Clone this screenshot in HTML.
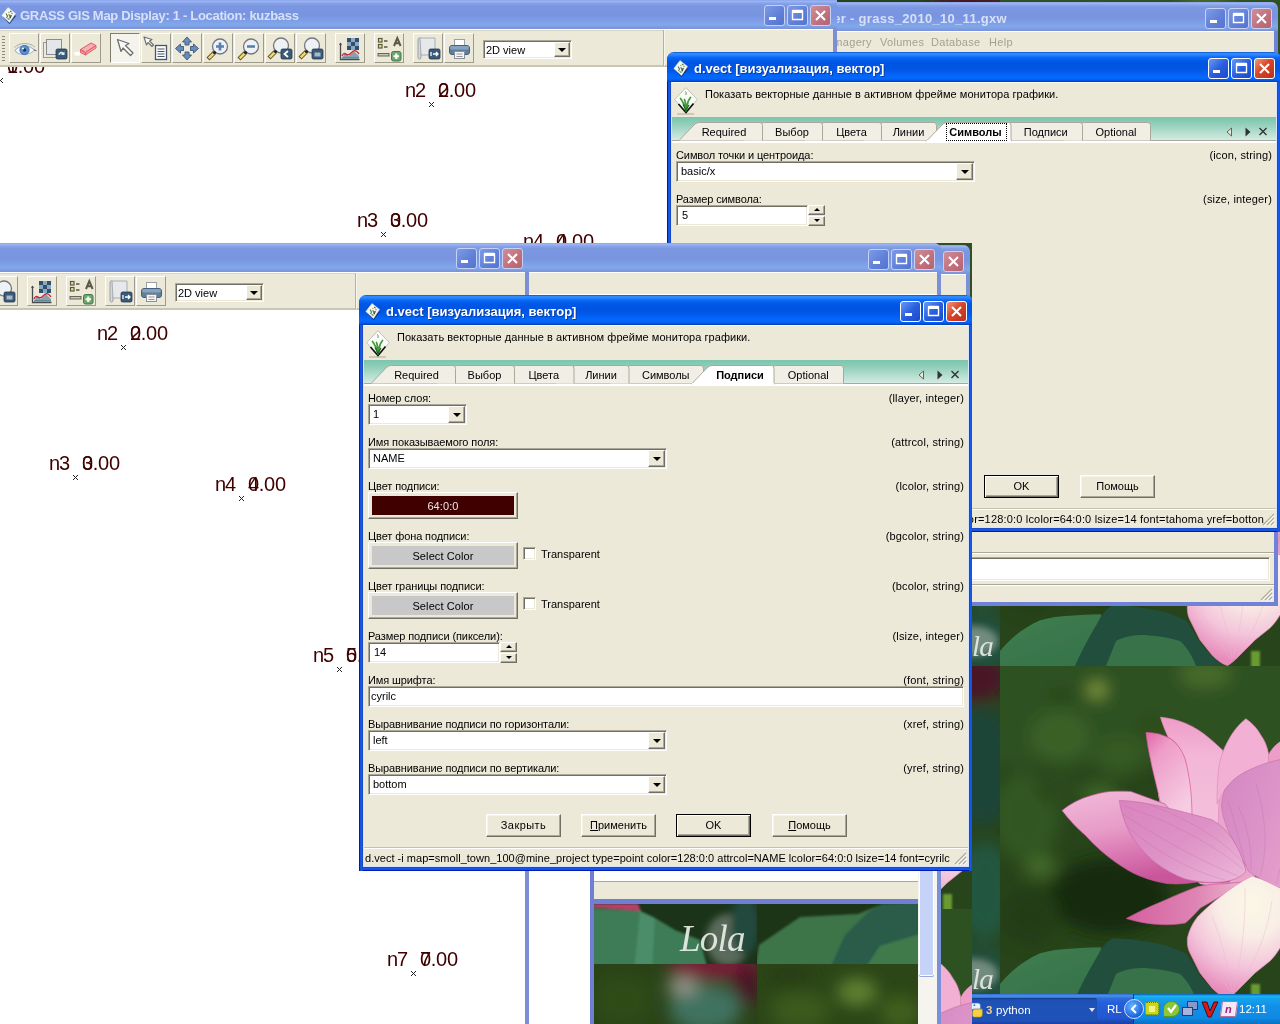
<!DOCTYPE html>
<html><head><meta charset="utf-8"><title>GRASS GIS</title>
<style>
*{box-sizing:border-box;margin:0;padding:0}
html,body{width:1280px;height:1024px;overflow:hidden;background:#27431a}
body{position:relative;opacity:.999;font-family:"Liberation Sans",sans-serif;font-size:11px;color:#000}
.a{position:absolute}
.t{position:absolute;white-space:nowrap;line-height:13px;height:13px;font-size:11px;letter-spacing:0}
.r{text-align:right;letter-spacing:.15px}
.clip{position:absolute;overflow:hidden}
.tb{position:absolute;left:0;top:0;height:30px;width:100%;border-radius:7px 7px 0 0}
.tb.act{background:linear-gradient(#0a50c8 0,#2f8aff 5%,#2a84ff 10%,#0a68f4 18%,#0058e6 30%,#0054e2 48%,#0259ea 64%,#0366fa 78%,#0468fc 88%,#0458e8 94%,#0043bd 100%)}
.tb.ina{background:linear-gradient(#8aa4ea 0,#9ab5f2 5%,#86a1e8 12%,#7b97e0 20%,#7994e0 55%,#7e9fe8 72%,#81a8e8 86%,#7e9ce2 93%,#7b90dc 100%)}
.tt{position:absolute;top:9px;font-weight:bold;font-size:13px;line-height:16px;white-space:nowrap;color:#fff;text-shadow:1px 1px 0 rgba(10,42,128,.65)}
.ina .tt{color:#d6e0f7;text-shadow:none}
.wb{position:absolute;top:6px;width:21px;height:21px;border:1px solid #fff;border-radius:3px;background:linear-gradient(135deg,#6a98f4 0,#2a5fe0 50%,#1c48c8 100%)}
.wb.cl{background:linear-gradient(135deg,#ee9a7a 0,#d8452a 45%,#b8301a 100%)}
.ina .wb{border-color:#c5d2f2;background:linear-gradient(135deg,#7d9be6 0,#5f7fd8 60%,#5474cf 100%)}
.ina .wb.cl{background:linear-gradient(135deg,#cf8f98 0,#c0707c 60%,#b46472 100%)}
.wb svg{position:absolute;left:0;top:0;width:19px;height:19px}
.beige{background:#ece9d8}
.sunk{position:absolute;background:#fff;border:1px solid;border-color:#aca899 #fff #fff #aca899;box-shadow:inset 1px 1px 0 #716f64,inset -1px -1px 0 #ece9d8}
.cbtn{position:absolute;background:#ece9d8;border:1px solid;border-color:#fff #716f64 #716f64 #fff;box-shadow:inset -1px -1px 0 #aca899,inset 1px 1px 0 #ece9d8}
.cbtn i{position:absolute;left:50%;top:50%;margin:-2px 0 0 -4px;border-style:solid;border-width:4px 4px 0 4px;border-color:#000 transparent transparent transparent;width:0;height:0}
.btn{position:absolute;height:23px;width:75px;background:#ece9d8;border:1px solid;border-color:#fff #716f64 #716f64 #fff;box-shadow:inset -1px -1px 0 #aca899,inset 1px 1px 0 #f6f4ea;text-align:center;line-height:20px;font-size:11px}
.btn.def{border-color:#000;box-shadow:inset 1px 1px 0 #fff,inset -1px -1px 0 #716f64,inset -2px -2px 0 #aca899}
.tab{position:absolute;top:5px;height:19px;background:#f2f0e6;border:1px solid #aca899;border-bottom:0;border-left:0;text-align:center;line-height:17px;font-size:11px;letter-spacing:.15px}
.ml{position:absolute;white-space:nowrap;font-size:20px;line-height:22px;color:#400000;letter-spacing:-.3px}
.mx{position:absolute;width:5px;height:5px;background:linear-gradient(45deg,transparent 42%,#222 42%,#222 58%,transparent 58%),linear-gradient(-45deg,transparent 42%,#222 42%,#222 58%,transparent 58%)}
</style></head><body>
<svg width="0" height="0" style="position:absolute"><defs>
<filter id="b6" x="-30%" y="-30%" width="160%" height="160%"><feGaussianBlur stdDeviation="8"/></filter>
<filter id="b3" x="-30%" y="-30%" width="160%" height="160%"><feGaussianBlur stdDeviation="3.5"/></filter>
<filter id="b2" x="-20%" y="-20%" width="140%" height="140%"><feGaussianBlur stdDeviation="1.2"/></filter>
<filter id="b1"><feGaussianBlur stdDeviation=".6"/></filter>
<linearGradient id="pk1" x1="0" y1="0" x2=".35" y2="1"><stop offset="0" stop-color="#f2bcd9"/><stop offset=".45" stop-color="#e79cc8"/><stop offset=".75" stop-color="#d873b0"/><stop offset="1" stop-color="#c9559a"/></linearGradient>
<linearGradient id="pk2" x1="0" y1="0" x2="1" y2=".6"><stop offset="0" stop-color="#d486c2"/><stop offset=".6" stop-color="#dc94c8"/><stop offset="1" stop-color="#e4a0cc"/></linearGradient>
<linearGradient id="pk3" x1="0" y1="0" x2=".6" y2="1"><stop offset="0" stop-color="#e068a8"/><stop offset=".3" stop-color="#ee9cc8"/><stop offset="1" stop-color="#f6cce2"/></linearGradient>
<linearGradient id="pk5" x1="0" y1="0" x2="0" y2="1"><stop offset="0" stop-color="#ee9cc8"/><stop offset=".35" stop-color="#f3b6d6"/><stop offset="1" stop-color="#f4c0dc"/></linearGradient>
<linearGradient id="pk6" x1="0" y1="0" x2="1" y2="1"><stop offset="0" stop-color="#da84be"/><stop offset=".5" stop-color="#dd92c6"/><stop offset="1" stop-color="#edb8d8"/></linearGradient>
<radialGradient id="wh" gradientUnits="userSpaceOnUse" cx="252" cy="238" r="92"><stop offset="0" stop-color="#fbf8e6"/><stop offset=".35" stop-color="#f9eee6"/><stop offset=".7" stop-color="#f3c4da"/><stop offset="1" stop-color="#e88cbc"/></radialGradient>
<linearGradient id="pk4" x1="0" y1="0" x2="1" y2="0"><stop offset="0" stop-color="#d4609e"/><stop offset=".6" stop-color="#de84b4"/><stop offset="1" stop-color="#ecb4cc"/></linearGradient>
<linearGradient id="lf1" x1="0" y1="0" x2="1" y2="1"><stop offset="0" stop-color="#3f7e50"/><stop offset="1" stop-color="#347048"/></linearGradient>
<symbol id="tile" viewBox="0 0 500 333" overflow="hidden">
<rect width="500" height="333" fill="#27441a"/>
<g filter="url(#b6)">
<rect x="-20" y="-20" width="330" height="120" fill="#2f5120"/>
<ellipse cx="97" cy="24" rx="9" ry="8" fill="#86a044"/><ellipse cx="60" cy="30" rx="14" ry="10" fill="#2c4a1c"/><ellipse cx="150" cy="60" rx="14" ry="12" fill="#2d4c1c"/><ellipse cx="100" cy="130" rx="18" ry="14" fill="#3d6426"/><ellipse cx="40" cy="200" rx="16" ry="12" fill="#456b2a"/><ellipse cx="205" cy="8" rx="26" ry="14" fill="#466a2a"/>
<ellipse cx="60" cy="70" rx="30" ry="25" fill="#3b6026"/><ellipse cx="120" cy="90" rx="25" ry="20" fill="#345a22"/>
<ellipse cx="25" cy="150" rx="35" ry="45" fill="#335720"/><ellipse cx="110" cy="230" rx="60" ry="38" fill="#16290e"/>
<ellipse cx="30" cy="250" rx="30" ry="30" fill="#223d15"/><ellipse cx="60" cy="120" rx="25" ry="20" fill="#2a4a1b"/>
<ellipse cx="470" cy="12" rx="40" ry="24" fill="#4a1226"/><ellipse cx="480" cy="100" rx="40" ry="60" fill="#1f4438"/>
<ellipse cx="485" cy="225" rx="30" ry="50" fill="#245741"/><ellipse cx="480" cy="310" rx="40" ry="30" fill="#21503c"/>
</g>
<g filter="url(#b1)">
<path d="M0 333L0 318C10 305 25 294 40 287.300C50 284.500 60 283 70 282.800C80 282 90 281.500 100.500 281.300L130 333Z" fill="url(#lf1)"/>
<path d="M75 333C85 310 95 295 100.500 284.300C104 279 108 275 112.600 272.200C130 273 146 275 161 278.200C170 280.500 178 283.500 185.300 287.300C190 293 194 299 197.400 305.500C203 315 212 324 224 333Z" fill="#20503e"/>
<path d="M106 333L116 308C125 303 134 302 145 302C160 303 170 305 180 308C188 315 193 325 196 333Z" fill="#37724a"/>
</g>
<g stroke-width=".7">
<path d="M158 128L190 120L222 112L250 135L255 212L232 224L200 218L170 190Z" fill="#e9a6cd"/>
<path d="M160.500 51.200C169 52 177 54 185.300 57.300C194 61 202 66 209.500 72.400C214 76 218 80 223 84.500C222 95 221 105 220 115L218 160L188 156C190 125 188 108 185 93.600C181 82 175 75 168 71C165 64 162 57 160.500 51.200Z" fill="url(#pk5)" stroke="#e088b8"/>
<path d="M245.800 52.750C238 59 232 67 227.700 75.500C223 84 220 93 218.600 102.700C217.500 113 217 125 217 138L224.600 124C232 115 238 110 245.800 105.700L268.500 97L268.500 87.600C267 80 264.500 74 261 69.400C257 62 252 57 245.800 52.750Z" fill="#f2b0d4" stroke="#e38cba"/>
<path d="M300 66C290 69 283 73 278 77C273 81 270 85 268.500 89L268.500 99L300 92Z" fill="#ee9cc8"/>
<path d="M146 66.400C147 75 148.500 85 150.500 93.600C153 107 157 120 161 140L192 152C192 125 189 108 185.300 93.600C182 84 177 77 170 72.400C163 68.500 155 66.500 146 66.400Z" fill="url(#pk3)" stroke="#d8589c"/>
<path d="M221.600 139C222 134 223 129 224.600 124C230 116 237 110 245.800 105.700C257 100 268 96 280 93.600L300 91L300 226L280 222C276 221 273 219.500 270 217.700C262 214 255 210 248.800 205.600C243 195 238 183 233.700 175C228 165 222 152 221.600 139Z" fill="url(#pk2)" stroke="#c774ac"/>
<path d="M62 144.500C70 138 78 134 85 131.500C95 128 103 126 110 125.500C118 125 125 125 131 125.500L165 138L230 216C215 217 205 216.500 197 216C188 217.500 178 218.500 167 217.500C158 216 150 214 140 210C132 207 124 202 116 196.500C105 189 95 180 85 169C78 163 70 155 62 144.500Z" fill="url(#pk1)" stroke="#c8529a"/>
<path d="M126.300 252.500C138 246 150 240.500 161 235.900C174 230 186 225 197.400 220.700C207 218.500 216 217.700 224.600 217.700L242 216L225 228C216 233 208 238 200.400 241.900C195 248 190 253 185.300 257C177 258.500 169 259 161 258.600C149 258 137 256 126.300 252.500Z" fill="url(#pk4)" stroke="#c8589a"/>
<path d="M119.300 134.500C135 135 148 137.500 161 140.500C172 143 182 145.500 191 148C199 150 206 152 212.500 154C221 159 228 166 233.700 175C240 185 243.500 195 246 205.500C240 212 232 215 221.600 216C209 217 197 216 185 213C174 209 164 203 155 196.500C145 188 137 179 131 169C125 158 121 146 119.300 134.500Z" fill="url(#pk6)" stroke="#c86aaa"/>
<path d="M251.900 210C240 216 230 223 221.600 229.800C212 237 204 244 197.400 251C192 258 189 265 187.400 272.200C187 279 188 283 190 287L200 307L212 322C217 327 222 331 227.500 332.500C231 331 236 326 240 322L255 307L270 295C274 291 277 287 280 282L300 262L300 230L280 222C270 217 260 212 251.900 210Z" fill="url(#wh)" stroke="#e68aba"/>
</g>
<g fill="none" stroke="#b860a4" stroke-width=".5" opacity=".5">
<path d="M124 140C160 152 205 172 243 203M123 148C152 168 200 195 238 210M150 139C185 152 222 172 244 198M127 160C150 182 190 205 225 214"/>
<path d="M238 140C248 160 252 185 251 205M256 118C266 150 268 185 260 210M280 100C288 140 288 180 276 218M228 135C236 160 242 185 246 200"/>
</g>
<g fill="none" stroke="#eeb4d0" stroke-width=".6" opacity=".7">
<path d="M212 250C222 275 228 300 232 326M245 222C246 260 240 300 233 326M272 235C266 275 250 305 236 326M198 272C210 295 222 312 230 326"/>
</g>
<g filter="url(#b3)" opacity=".6"><ellipse cx="474" cy="308" rx="24" ry="15" fill="#a8b4ac"/></g><g filter="url(#b2)"><rect x="251" y="318" width="9" height="17" fill="#6a9a30"/></g>
<text x="493" y="323" text-anchor="end" font-family="Liberation Serif,serif" font-style="italic" font-size="29" fill="#e8ece6" letter-spacing="-.8" opacity=".92">Lola</text>
</symbol>
</defs></svg>
<svg class="a" style="left:830px;top:0px" width="450" height="8" viewBox="830 0 450 8"><use href="#tile" x="500" y="0" width="500" height="333"/><use href="#tile" x="1000" y="0" width="500" height="333"/></svg><svg class="a" style="left:968px;top:596px" width="312" height="404" viewBox="968 596 312 404"><use href="#tile" x="500" y="333" width="500" height="333"/><use href="#tile" x="500" y="666" width="500" height="333"/><use href="#tile" x="500" y="999" width="500" height="333"/><use href="#tile" x="1000" y="333" width="500" height="333"/><use href="#tile" x="1000" y="666" width="500" height="333"/><use href="#tile" x="1000" y="999" width="500" height="333"/></svg><svg class="a" style="left:1274px;top:0px" width="6" height="600" viewBox="1274 0 6 600"><use href="#tile" x="1000" y="0" width="500" height="333"/><use href="#tile" x="1000" y="333" width="500" height="333"/></svg>
<div class="a" style="left:972px;top:994px;width:308px;height:30px;background:linear-gradient(#3168d5 0,#4993e6 6%,#2e6fdc 14%,#245edb 30%,#2257d0 80%,#1941a5 100%)"><div class="a" style="left:-4px;top:4px;width:129px;height:24px;border-radius:3px;background:#1e52b7;box-shadow:inset 1px 1px 2px #143a8a"></div><svg class="a" style="left:-2px;top:8px" width="14" height="16" viewBox="0 0 16 18"><path d="M2 1h7a3 3 0 0 1 3 3v4H4a3 3 0 0 0-3 3V4a3 3 0 0 1 1-3z" fill="#e8f0fa" stroke="#3a70a8" stroke-width=".7"/><path d="M4 17h7a3 3 0 0 0 3-3V8H6a3 3 0 0 0-3 3v3a3 3 0 0 0 1 3z" fill="#f8d040" stroke="#c09a20" stroke-width=".7"/><circle cx="5" cy="3.500" r="1" fill="#3a70a8"/></svg><div class="t" style="left:14px;top:10px;color:#f0c890;font-weight:bold;font-size:11.500px">3</div><div class="t" style="left:24px;top:10px;color:#fff;font-size:11.500px">python</div><div class="a" style="left:117px;top:14px;border:3.500px solid transparent;border-top:4px solid #dfe8ff;border-bottom:0"></div><div class="t" style="left:135px;top:9px;color:#fff;font-size:11.500px">RL</div><div class="a" style="left:161px;top:0;width:147px;height:30px;background:linear-gradient(#0c59b9 0,#19b9f3 7%,#17a3ec 14%,#1290e8 40%,#0f8ae4 80%,#0b6fc4 100%);border-left:1px solid #0a3a8a"></div><div class="a" style="left:152px;top:5px;width:20px;height:20px;border-radius:10px;background:radial-gradient(circle at 40% 35%,#6ab4ff,#1a62e0 70%);border:1px solid #cfe0ff"></div><svg class="a" style="left:156px;top:9px" width="12" height="12" viewBox="0 0 12 12"><path d="M8 2L4 6l4 4" stroke="#fff" stroke-width="2" fill="none"/></svg><div class="a" style="left:173px;top:8px;width:14px;height:13px;background:#c8d820;border:1px dotted #5a7a10;border-radius:2px"></div><div class="a" style="left:177px;top:12px;width:6px;height:6px;background:#f8f080"></div><div class="a" style="left:191px;top:7px;width:17px;height:16px;border-radius:8px 8px 8px 2px;background:#8ac83a;border:1px solid #5a9a20"></div><svg class="a" style="left:194px;top:10px" width="12" height="10" viewBox="0 0 12 10"><path d="M2 4l3 4l5-7" stroke="#fff" stroke-width="2.200" fill="none"/></svg><div class="a" style="left:215px;top:7px;width:11px;height:9px;background:#8898c8;border:1px solid #2a3a6a"></div><div class="a" style="left:210px;top:13px;width:11px;height:9px;background:#a8b4dc;border:1px solid #2a3a6a"></div><svg class="a" style="left:229px;top:6px" width="18" height="18" viewBox="0 0 18 18"><path d="M1 2h5l3 9l4-9h4l-7 15h-3z" fill="#d81818" stroke="#300" stroke-width=".8"/></svg><div class="a" style="left:249px;top:7px;width:16px;height:16px;background:#f4e8f4;border:1px solid #b070a0;transform:skewX(-8deg)"></div><div class="t" style="left:253px;top:9px;color:#a02080;font-style:italic;font-weight:bold">n</div><div class="t" style="left:267px;top:9px;color:#fff;font-size:11.500px">12:11</div></div>
<div class="a" style="left:700px;top:2px;width:578px;height:604px;background:#6f82d8;border-radius:7px 7px 0 0"><div class="tb ina" style="width:578px;height:29px"><div class="tt" style="right:271px;top:9px;letter-spacing:.3px">GRASS GIS Layer Manager - grass_2010_10_11.gxw</div><div class="wb" style="left:505px;top:6px"><svg viewBox="0 0 19 19"><rect x="4" y="11" width="7" height="3" fill="#fff"/></svg></div><div class="wb" style="left:528px;top:6px"><svg viewBox="0 0 19 19"><path d="M4.5 5.5h10v8h-10z M4.5 4.5h10" stroke="#fff" stroke-width="1.4" fill="none"/><rect x="4" y="4" width="11" height="3" fill="#fff"/></svg></div><div class="wb cl" style="left:551px;top:6px"><svg viewBox="0 0 19 19"><path d="M5 5l9 9M14 5l-9 9" stroke="#fff" stroke-width="2.1" fill="none"/></svg></div></div><div class="a beige" style="left:4px;top:29px;width:570px;height:571px;border-top:1px solid #fff"><div class="t" style="left:126px;top:4px;color:#a3a195;font-size:11px;letter-spacing:.3px">Imagery</div><div class="t" style="left:176px;top:4px;color:#a3a195;font-size:11px;letter-spacing:.3px">Volumes</div><div class="t" style="left:227px;top:4px;color:#a3a195;font-size:11px;letter-spacing:.3px">Database</div><div class="t" style="left:285px;top:4px;color:#a3a195;font-size:11px;letter-spacing:.3px">Help</div><div class="a" style="left:0;top:21px;width:570px;height:1px;background:#fff"></div><div class="a" style="left:0;top:520px;width:570px;height:1px;background:#aca899"></div><div class="a" style="left:0;top:521px;width:570px;height:1px;background:#fff"></div><div class="sunk" style="left:2px;top:525px;width:564px;height:24px"></div><div class="a" style="left:0;top:552px;width:570px;height:1px;background:#aca899"></div><div class="a" style="left:0;top:553px;width:570px;height:1px;background:#fff"></div><svg class="a" style="left:556px;top:556px" width="13" height="13" viewBox="0 0 13 13"><path d="M12 1L1 12M12 5L5 12M12 9L9 12" stroke="#aca899" stroke-width="1.2"/><path d="M13 1L2 12M13 5L6 12M13 9L10 12" stroke="#fff" stroke-width="1" transform="translate(-.2,1)"/></svg></div></div>
<div class="a" style="left:0px;top:0px;width:837px;height:300px;background:#7b8fd6"><div class="tb ina" style="width:837px;height:29px;border-radius:0"><svg class="a" style="left:1px;top:7px" width="16" height="17" viewBox="0 0 16 17"><path d="M2.500 9.500L8.500 16L14.500 8.500" fill="none" stroke="#1a2a5a" stroke-width="1.600" opacity=".75"/><path d="M7 .5L14.500 6.500L8.500 15.500L.8 8.500Z" fill="#f6f8f6" stroke="#dfe6ee" stroke-width=".5"/><path d="M5 6.500l1.500 2.500l-1 2M9 4l1.500 1M7.500 7.500l2 1.500M10.500 8l-1.500 3.500M6.500 11.500l2 1" stroke="#4a7a3a" stroke-width="1.100" fill="none"/><path d="M10.500 6l1 1M7.500 5l.8 1" stroke="#b8862a" stroke-width="1.100"/><path d="M8.500 9.500l1 1" stroke="#333" stroke-width="1.200"/></svg><div class="tt" style="left:20px;top:8px;letter-spacing:-.3px">GRASS GIS Map Display: 1 - Location: kuzbass</div><div class="wb" style="left:764px;top:5px"><svg viewBox="0 0 19 19"><rect x="4" y="11" width="7" height="3" fill="#fff"/></svg></div><div class="wb" style="left:787px;top:5px"><svg viewBox="0 0 19 19"><path d="M4.5 5.5h10v8h-10z M4.5 4.5h10" stroke="#fff" stroke-width="1.4" fill="none"/><rect x="4" y="4" width="11" height="3" fill="#fff"/></svg></div><div class="wb cl" style="left:810px;top:5px"><svg viewBox="0 0 19 19"><path d="M5 5l9 9M14 5l-9 9" stroke="#fff" stroke-width="2.1" fill="none"/></svg></div></div><div class="a beige" style="left:0;top:29px;width:833px;height:38px;border-top:1px solid #fff;border-bottom:2px solid #c9c6b6"></div><div class="a" style="left:663px;top:30px;width:1px;height:36px;background:#b5b2a2"></div><div class="a" style="left:664px;top:30px;width:1px;height:36px;background:#f6f5ee"></div><div class="a" style="left:0;top:30px;width:663px;height:1px;background:#d8d5c6"></div><div class="a" style="left:2px;top:36px;width:3px;height:26px;background:repeating-linear-gradient(#8a8878 0,#8a8878 1px,transparent 1px,transparent 3px)"></div><div class="a" style="left:9px;top:33px;width:30px;height:30px;border:1px solid;border-color:#fff #9e9b8b #9e9b8b #fff;"><svg class="a" style="left:-1px;top:-1px" width="30" height="30" viewBox="0 0 30 30"><path d="M6 17.500C10 11.500 20 11.500 25.500 17C20 23 10 23 6 17.500Z" fill="#f6f8fb" stroke="#9fb4c8" stroke-width="1.100"/><circle cx="15.500" cy="17" r="4.600" fill="#5a8fd0" stroke="#3a6aaa" stroke-width=".9"/><circle cx="15.500" cy="17" r="1.800" fill="#1f3560"/><circle cx="14" cy="15.500" r="1.100" fill="#e8f0fa"/><path d="M5.500 14.500C10 9.500 20 9 26 14" stroke="#9aa8b4" stroke-width=".9" fill="none"/><path d="M25 17l2.500 .8" stroke="#7a6a6a" stroke-width="1.200"/></svg></div><div class="a" style="left:40px;top:33px;width:30px;height:30px;border:1px solid;border-color:#fff #9e9b8b #9e9b8b #fff;"><svg class="a" style="left:-1px;top:-1px" width="30" height="30" viewBox="0 0 30 30"><rect x="3.5" y="9.5" width="15" height="15" fill="#ece9d8" stroke="#9a9a9a"/><rect x="6.5" y="6.5" width="15" height="15" fill="#e4e6ea" stroke="#8a8a90"/><rect x="16" y="16" width="11" height="10" rx="1.5" fill="#3a5a78" stroke="#22384e" stroke-width=".8"/><path d="M18.5 22a3 3 0 0 1 5-2.5l1-1v3.5h-3.5l1.2-1.2a1.6 1.6 0 0 0-2.5 1.2z" fill="#dfe8f2"/></svg></div><div class="a" style="left:71px;top:33px;width:30px;height:30px;border:1px solid;border-color:#fff #9e9b8b #9e9b8b #fff;"><svg class="a" style="left:-1px;top:-1px" width="30" height="30" viewBox="0 0 30 30"><path d="M9.500 16.500L20 10L25 12.500L14.500 19.500Z" fill="#f6b0b4" stroke="#e05864" stroke-width="1"/><path d="M9.500 16.500L14.500 19.500L14.500 22L9.500 19.500Z" fill="#f09098" stroke="#e05864" stroke-width=".9"/><path d="M14.500 19.500L25 12.500L25 15L14.500 22Z" fill="#f3a0a8" stroke="#e05864" stroke-width=".9"/><rect x="3.500" y="19" width="5.500" height="3.500" fill="#fff"/></svg></div><div class="a" style="left:110px;top:33px;width:30px;height:30px;border:1px solid;border-color:#fff #9e9b8b #9e9b8b #fff;background:#f5f4ec;border-color:#7f7d70 #fff #fff #7f7d70;"><svg class="a" style="left:-1px;top:-1px" width="30" height="30" viewBox="0 0 30 30"><path d="M7.500 6.500L19 10.500L15.500 12.500L23 20L20.500 22.500L13 15L11 18.500Z" fill="#fafafa" stroke="#6e6e6e" stroke-width="1.300" stroke-linejoin="round"/></svg></div><div class="a" style="left:141px;top:33px;width:30px;height:30px;border:1px solid;border-color:#fff #9e9b8b #9e9b8b #fff;"><svg class="a" style="left:-1px;top:-1px" width="30" height="30" viewBox="0 0 30 30"><path d="M3 4L11 6.500L8.500 8L12.500 12L11 13.500L7 9.500L5.500 12Z" fill="#fafafa" stroke="#6e6e6e" stroke-width="1.100" stroke-linejoin="round"/><rect x="14.500" y="12.500" width="11" height="14" fill="#fdfdfd" stroke="#44566a" stroke-width="1.300"/><path d="M16.500 16h7M16.500 18.500h7M16.500 21h7M16.500 23.500h7" stroke="#44566a" stroke-width="1.100"/></svg></div><div class="a" style="left:172px;top:33px;width:30px;height:30px;border:1px solid;border-color:#fff #9e9b8b #9e9b8b #fff;"><svg class="a" style="left:-1px;top:-1px" width="30" height="30" viewBox="0 0 30 30"><g fill="#6a8cba" stroke="#3a5478" stroke-width=".9" stroke-linejoin="round"><path d="M15 4L19.500 9h-2.500v3h-4v-3h-2.500Z"/><path d="M15 27L19.500 22h-2.500v-3h-4v3h-2.500Z"/><path d="M3.500 15.500L8.500 11v2.500h3v4h-3v2.500Z"/><path d="M26.500 15.500L21.500 11v2.500h-3v4h3v2.500Z"/></g></svg></div><div class="a" style="left:203px;top:33px;width:30px;height:30px;border:1px solid;border-color:#fff #9e9b8b #9e9b8b #fff;"><svg class="a" style="left:-1px;top:-1px" width="30" height="30" viewBox="0 0 30 30"><circle cx="17" cy="13.5" r="7.500" fill="#eef1f5" stroke="#74787e" stroke-width="1.300"/><path d="M11.5 19.5l-6.500 6.500" stroke="#5a4a20" stroke-width="4.200" stroke-linecap="butt"/><path d="M10.7 20.3l-5 5" stroke="#ead870" stroke-width="2.600" stroke-linecap="butt"/><circle cx="11.5" cy="19.5" r="1.600" fill="#222"/><path d="M17 9.500v8M13 13.500h8" stroke="#5580b0" stroke-width="2.600"/></svg></div><div class="a" style="left:234px;top:33px;width:30px;height:30px;border:1px solid;border-color:#fff #9e9b8b #9e9b8b #fff;"><svg class="a" style="left:-1px;top:-1px" width="30" height="30" viewBox="0 0 30 30"><circle cx="17" cy="13.5" r="7.500" fill="#eef1f5" stroke="#74787e" stroke-width="1.300"/><path d="M11.5 19.5l-6.500 6.500" stroke="#5a4a20" stroke-width="4.200" stroke-linecap="butt"/><path d="M10.7 20.3l-5 5" stroke="#ead870" stroke-width="2.600" stroke-linecap="butt"/><circle cx="11.5" cy="19.5" r="1.600" fill="#222"/><path d="M13 13.500h8" stroke="#5580b0" stroke-width="2.600"/></svg></div><div class="a" style="left:265px;top:33px;width:30px;height:30px;border:1px solid;border-color:#fff #9e9b8b #9e9b8b #fff;"><svg class="a" style="left:-1px;top:-1px" width="30" height="30" viewBox="0 0 30 30"><circle cx="16" cy="12.5" r="7.500" fill="#eef1f5" stroke="#74787e" stroke-width="1.300"/><path d="M10.5 18.5l-6.500 6.500" stroke="#5a4a20" stroke-width="4.200" stroke-linecap="butt"/><path d="M9.7 19.3l-5 5" stroke="#ead870" stroke-width="2.600" stroke-linecap="butt"/><circle cx="10.5" cy="18.5" r="1.600" fill="#222"/><rect x="16" y="16" width="11" height="10" rx="1.5" fill="#3a5a78" stroke="#22384e" stroke-width=".8"/><path d="M23 18l-3.500 3l3.500 3" stroke="#fff" stroke-width="1.8" fill="none"/></svg></div><div class="a" style="left:296px;top:33px;width:30px;height:30px;border:1px solid;border-color:#fff #9e9b8b #9e9b8b #fff;"><svg class="a" style="left:-1px;top:-1px" width="30" height="30" viewBox="0 0 30 30"><circle cx="16" cy="12.5" r="7.500" fill="#eef1f5" stroke="#74787e" stroke-width="1.300"/><path d="M10.5 18.5l-6.500 6.500" stroke="#5a4a20" stroke-width="4.200" stroke-linecap="butt"/><path d="M9.7 19.3l-5 5" stroke="#ead870" stroke-width="2.600" stroke-linecap="butt"/><circle cx="10.5" cy="18.5" r="1.600" fill="#222"/><rect x="16" y="16" width="11" height="10" rx="1.5" fill="#3a5a78" stroke="#22384e" stroke-width=".8"/><path d="M18.500 19.500h6v4h-6z" fill="#a8b8c8"/></svg></div><div class="a" style="left:335px;top:33px;width:30px;height:30px;border:1px solid;border-color:#fff #9e9b8b #9e9b8b #fff;"><svg class="a" style="left:-1px;top:-1px" width="30" height="30" viewBox="0 0 30 30"><path d="M5.500 10v16.500h19" stroke="#4a4a4a" stroke-width="1.300" fill="none"/><path d="M5.500 9.500l-1.500 2.500h3z" fill="#4a4a4a"/><g fill="#2f5070"><rect x="12" y="5" width="4" height="4"/><rect x="20" y="5" width="4" height="4"/><rect x="16" y="9" width="4" height="4"/><rect x="12" y="13" width="4" height="4"/><rect x="20" y="13" width="4" height="4"/></g><g fill="#8fa8c0"><rect x="16" y="5" width="4" height="4"/><rect x="12" y="9" width="4" height="4"/><rect x="20" y="9" width="4" height="4"/><rect x="16" y="13" width="4" height="4"/></g><path d="M7 25L10 20L14 23L19 18L24 23L24 25Z" fill="#8f9fb0"/><path d="M7 23C9 17 12 24 15 21S20 15 24 21" stroke="#c02a3a" stroke-width="1.300" fill="none"/><path d="M7 25h17" stroke="#2a7a8a" stroke-width="1"/></svg></div><div class="a" style="left:374px;top:33px;width:30px;height:30px;border:1px solid;border-color:#fff #9e9b8b #9e9b8b #fff;"><svg class="a" style="left:-1px;top:-1px" width="30" height="30" viewBox="0 0 30 30"><rect x="4.500" y="5.500" width="3.500" height="3.500" fill="#e8e0a0" stroke="#5a5a3a" stroke-width="1.200"/><rect x="4.500" y="11.500" width="3.500" height="3.500" fill="#e8e0a0" stroke="#5a5a3a" stroke-width="1.200"/><path d="M10 8h3.500M10 14h3.500" stroke="#5a5a3a" stroke-width="1.400"/><rect x="4" y="20.500" width="11" height="2.500" fill="#c8c8b8" stroke="#5a5a4a" stroke-width=".9"/><path d="M20 13L23.300 5L26.600 13M21.300 10.300h4" stroke="#5a5a44" stroke-width="2" fill="none"/><rect x="17.500" y="18.500" width="9.500" height="9.500" rx="2" fill="#6fa46f" stroke="#3f7a48"/><path d="M22.250 20.500v5.500M19.500 23.250h5.500" stroke="#f4fff4" stroke-width="2.200"/></svg></div><div class="a" style="left:413px;top:33px;width:30px;height:30px;border:1px solid;border-color:#fff #9e9b8b #9e9b8b #fff;"><svg class="a" style="left:-1px;top:-1px" width="30" height="30" viewBox="0 0 30 30"><path d="M5 7C5 4 8 4 8 7V24C8 27 5 27 5 24Z" fill="#d4d8dc" stroke="#9aa0a6"/><path d="M7 5h15v17H8z" fill="#e6e8ea" stroke="#a8aeb4"/><rect x="16" y="16" width="11" height="10" rx="1.500" fill="#3a5a78" stroke="#22384e" stroke-width=".8"/><path d="M18 19v4M20 21h5M23 19l2 2l-2 2" stroke="#fff" stroke-width="1.300" fill="none"/></svg></div><div class="a" style="left:444px;top:33px;width:30px;height:30px;border:1px solid;border-color:#fff #9e9b8b #9e9b8b #fff;"><svg class="a" style="left:-1px;top:-1px" width="30" height="30" viewBox="0 0 30 30"><rect x="10.500" y="6.500" width="10" height="7" fill="#fff" stroke="#9aa0a8"/><rect x="5.500" y="12.500" width="20" height="9" rx="2.500" fill="#5f7f9f" stroke="#466078"/><rect x="6" y="13" width="19" height="3.500" rx="2" fill="#86a4c2"/><rect x="10.500" y="18.500" width="10" height="7" fill="#f6f6f6" stroke="#8a9098"/><path d="M12.500 21h6M12.500 23.500h6" stroke="#8a8a8a" stroke-width=".9"/></svg></div><div class="sunk" style="left:483px;top:40px;width:89px;height:19px"><div class="t" style="left:2px;top:3px">2D view</div><div class="cbtn" style="right:1px;top:1px;width:16px;height:15px"><i></i></div></div><div class="clip" style="left:0;top:67px;width:833px;height:233px;background:#fff"><div class="ml" style="left:-26px;top:-12px;letter-spacing:-1.2px">n1</div><div class="ml" style="left:7px;top:-12px">0.00</div><div class="ml" style="left:7px;top:-12px">1</div><div class="mx" style="left:-2px;top:11px"></div><div class="ml" style="left:405px;top:12px;letter-spacing:-1.2px">n2</div><div class="ml" style="left:438px;top:12px">0.00</div><div class="ml" style="left:438px;top:12px">2</div><div class="mx" style="left:429px;top:35px"></div><div class="ml" style="left:357px;top:142px;letter-spacing:-1.2px">n3</div><div class="ml" style="left:390px;top:142px">0.00</div><div class="ml" style="left:390px;top:142px">3</div><div class="mx" style="left:381px;top:165px"></div><div class="ml" style="left:523px;top:163px;letter-spacing:-1.2px">n4</div><div class="ml" style="left:556px;top:163px">0.00</div><div class="ml" style="left:556px;top:163px">4</div><div class="mx" style="left:547px;top:186px"></div><div class="ml" style="left:621px;top:334px;letter-spacing:-1.2px">n5</div><div class="ml" style="left:654px;top:334px">0.00</div><div class="ml" style="left:654px;top:334px">5</div><div class="mx" style="left:645px;top:357px"></div><div class="ml" style="left:695px;top:638px;letter-spacing:-1.2px">n7</div><div class="ml" style="left:728px;top:638px">0.00</div><div class="ml" style="left:728px;top:638px">7</div><div class="mx" style="left:719px;top:661px"></div></div></div>
<div class="a" style="left:667px;top:52px;width:614px;height:480px;border-radius:8px 8px 0 0;background:linear-gradient(90deg,#0019b4 0,#0019b4 1px,#1550e0 1px,#1a5ae8 3px,#1a4cc8 3px,#1a4cc8 4px,#d6e4fb 4px,#d6e4fb 5px,#ece9d8 5px,#ece9d8 609px,#d6e4fb 609px,#d6e4fb 610px,#1a4cc8 610px,#1a4cc8 611px,#1a5ae8 611px,#1550e0 613px,#0019b4 613px)"><div class="a" style="left:0;bottom:0;width:614px;height:5px;background:linear-gradient(#d6e4fb 0,#d6e4fb 1px,#1a4cc8 1px,#1a4cc8 2px,#1a5ae8 2px,#1550e0 4px,#0019b4 4px)"></div><div class="a" style="left:0;bottom:0;width:4px;height:5px;background:linear-gradient(90deg,#0019b4 0,#0019b4 1px,#1550e0 1px,#1a5ae8 3px,#1a4cc8 3px)"></div><div class="a" style="right:0;bottom:0;width:4px;height:5px;background:linear-gradient(270deg,#0019b4 0,#0019b4 1px,#1550e0 1px,#1a5ae8 3px,#1a4cc8 3px)"></div><div class="tb act" style="width:614px;top:0px;height:30px"><svg class="a" style="left:6px;top:8px" width="16" height="17" viewBox="0 0 16 17"><path d="M2.500 9.500L8.500 16L14.500 8.500" fill="none" stroke="#1a2a5a" stroke-width="1.600" opacity=".75"/><path d="M7 .5L14.500 6.500L8.500 15.500L.8 8.500Z" fill="#f6f8f6" stroke="#dfe6ee" stroke-width=".5"/><path d="M5 6.500l1.500 2.500l-1 2M9 4l1.500 1M7.500 7.500l2 1.500M10.500 8l-1.500 3.500M6.500 11.500l2 1" stroke="#4a7a3a" stroke-width="1.100" fill="none"/><path d="M10.500 6l1 1M7.500 5l.8 1" stroke="#b8862a" stroke-width="1.100"/><path d="M8.500 9.500l1 1" stroke="#333" stroke-width="1.200"/></svg><div class="tt" style="left:27px">d.vect [визуализация, вектор]</div><div class="wb" style="left:541px;top:6px"><svg viewBox="0 0 19 19"><rect x="4" y="11" width="7" height="3" fill="#fff"/></svg></div><div class="wb" style="left:564px;top:6px"><svg viewBox="0 0 19 19"><path d="M4.5 5.5h10v8h-10z M4.5 4.5h10" stroke="#fff" stroke-width="1.4" fill="none"/><rect x="4" y="4" width="11" height="3" fill="#fff"/></svg></div><div class="wb cl" style="left:587px;top:6px"><svg viewBox="0 0 19 19"><path d="M5 5l9 9M14 5l-9 9" stroke="#fff" stroke-width="2.1" fill="none"/></svg></div></div><div class="a beige" style="left:5px;top:29px;width:604px;height:446px;overflow:hidden"><div class="a" style="left:0;top:0;width:604px;height:1px;background:#0043bd"></div><div class="a" style="left:0;top:1px;width:604px;height:1px;background:#fbfaf6"></div><svg class="a" style="left:2px;top:6px" width="24" height="28" viewBox="0 0 24 28"><path d="M3 27h17" stroke="#8a7a70" stroke-width="1" opacity=".6"/><path d="M12 .7L23.300 12.500L12 26L.7 12.500Z" fill="#fafbf8" stroke="#b9bdb4" stroke-width=".9"/><path d="M4.500 17L12 25.500L19.500 16.500" fill="none" stroke="#111" stroke-width="1.700" stroke-linejoin="miter"/><path d="M12 24C10.500 18 8.500 14 6.500 11.500M12 24C12.500 18 14.500 13 16.500 10.500M12 24C11.800 19 11.500 15 10.500 12.500M12 24C13 20 13.500 17 14 15" stroke="#3f9a3a" stroke-width="1.700" fill="none" stroke-linecap="round"/><path d="M12 24C11 21 10 19 9 17.500M12 24C13 21 14 19.500 15 18" stroke="#1f6a1f" stroke-width="1.300" fill="none"/><path d="M11.500 4.500c.8 1 .8 2.500.3 3.500" stroke="#5a7a4a" stroke-width=".9" fill="none"/></svg><div class="t" style="left:33px;top:7px;letter-spacing:.05px">Показать векторные данные в активном фрейме монитора графики.</div><div class="a" style="left:0;top:36px;width:604px;height:27px"><svg class="a" style="left:0;top:0" width="604" height="27" viewBox="0 0 604 27"><defs><linearGradient id="tg" x1="0" y1="0" x2="0" y2="1"><stop offset="0" stop-color="#7cc5ad"/><stop offset=".25" stop-color="#8dcdb7"/><stop offset="1" stop-color="#d9ede5"/></linearGradient></defs><rect x="0" y="0" width="604" height="24" fill="url(#tg)"/><rect x="0" y="23" width="604" height="1" fill="#aca899"/><rect x="0" y="24" width="604" height="2" fill="#fff"/><path d="M392,23.5 L392,23.5 L408,7 Q409.5,5.5 412.5,5.5 L476,5.5 Q478.5,5.5 478.5,8.5 L478.5,23.5 Z" fill="#f1efe5"/><path d="M392,23.5 L392,23.5 L408,7 Q409.5,5.5 412.5,5.5 L476,5.5 Q478.5,5.5 478.5,8.5 L478.5,23.5" fill="none" stroke="#aca899" stroke-width="1"/><text x="444.0" y="18.5" text-anchor="middle" font-family="Liberation Sans,sans-serif" font-size="11" letter-spacing="0">Optional</text><path d="M319.5,23.5 L319.5,23.5 L335.5,7 Q337.0,5.5 340.0,5.5 L408,5.5 Q410.5,5.5 410.5,8.5 L410.5,23.5 Z" fill="#f1efe5"/><path d="M319.5,23.5 L319.5,23.5 L335.5,7 Q337.0,5.5 340.0,5.5 L408,5.5 Q410.5,5.5 410.5,8.5 L410.5,23.5" fill="none" stroke="#aca899" stroke-width="1"/><text x="373.75" y="18.5" text-anchor="middle" font-family="Liberation Sans,sans-serif" font-size="11" letter-spacing="0">Подписи</text><path d="M191,23.5 L191,23.5 L207,7 Q208.5,5.5 211.5,5.5 L262,5.5 Q264.5,5.5 264.5,8.5 L264.5,23.5 Z" fill="#f1efe5"/><path d="M191,23.5 L191,23.5 L207,7 Q208.5,5.5 211.5,5.5 L262,5.5 Q264.5,5.5 264.5,8.5 L264.5,23.5" fill="none" stroke="#aca899" stroke-width="1"/><text x="236.5" y="18.5" text-anchor="middle" font-family="Liberation Sans,sans-serif" font-size="11" letter-spacing="0">Линии</text><path d="M132,23.5 L132,23.5 L148,7 Q149.5,5.5 152.5,5.5 L207,5.5 Q209.5,5.5 209.5,8.5 L209.5,23.5 Z" fill="#f1efe5"/><path d="M132,23.5 L132,23.5 L148,7 Q149.5,5.5 152.5,5.5 L207,5.5 Q209.5,5.5 209.5,8.5 L209.5,23.5" fill="none" stroke="#aca899" stroke-width="1"/><text x="179.5" y="18.5" text-anchor="middle" font-family="Liberation Sans,sans-serif" font-size="11" letter-spacing="0">Цвета</text><path d="M72,23.5 L72,23.5 L88,7 Q89.5,5.5 92.5,5.5 L148,5.5 Q150.5,5.5 150.5,8.5 L150.5,23.5 Z" fill="#f1efe5"/><path d="M72,23.5 L72,23.5 L88,7 Q89.5,5.5 92.5,5.5 L148,5.5 Q150.5,5.5 150.5,8.5 L150.5,23.5" fill="none" stroke="#aca899" stroke-width="1"/><text x="120.0" y="18.5" text-anchor="middle" font-family="Liberation Sans,sans-serif" font-size="11" letter-spacing="0">Выбор</text><path d="M7,23.5 L7,23.5 L23,7 Q24.5,5.5 27.5,5.5 L88,5.5 Q90.5,5.5 90.5,8.5 L90.5,23.5 Z" fill="#f1efe5"/><path d="M7,23.5 L7,23.5 L23,7 Q24.5,5.5 27.5,5.5 L88,5.5 Q90.5,5.5 90.5,8.5 L90.5,23.5" fill="none" stroke="#aca899" stroke-width="1"/><text x="52" y="18.5" text-anchor="middle" font-family="Liberation Sans,sans-serif" font-size="11" letter-spacing="0">Required</text><path d="M255,24.5 L255,23.5 L271,7 Q272.5,5.5 275.5,5.5 L336.5,5.5 Q339.0,5.5 339.0,8.5 L339.0,24.5 Z" fill="#fff"/><path d="M255,24.5 L255,23.5 L271,7 Q272.5,5.5 275.5,5.5 L336.5,5.5 Q339.0,5.5 339.0,8.5 L339.0,24.5" fill="none" stroke="#aca899" stroke-width="1"/><rect x="255" y="23" width="84.0" height="3" fill="#fff"/><text x="303.5" y="18.5" text-anchor="middle" font-family="Liberation Sans,sans-serif" font-size="11" font-weight="bold" letter-spacing="0">Символы</text><path d="M559.5,11 l-4.5,4 l4.5,4 Z" fill="#ece9d8" stroke="#555" stroke-width=".9"/><path d="M573.5,10.5 l5,4.5 l-5,4.5 Z" fill="#333"/><path d="M587.5,11 l7,7 M594.5,11 l-7,7" stroke="#333" stroke-width="1.4"/></svg><div class="a" style="left:274px;top:6px;width:60.5px;height:18px;border:1px dotted #000"></div></div><div class="t" style="left:4px;top:68px;letter-spacing:-.1px">Символ точки и центроида:</div><div class="t r" style="right:4px;top:68px">(icon, string)</div><div class="sunk" style="left:4px;top:80px;width:299px;height:21px"><div class="t" style="left:4px;top:3px">basic/x</div><div class="cbtn" style="right:1px;top:1px;width:17px;height:17px"><i></i></div></div><div class="t" style="left:4px;top:112px;letter-spacing:-.1px">Размер символа:</div><div class="t r" style="right:4px;top:112px">(size, integer)</div><div class="sunk" style="left:4px;top:124px;width:132px;height:21px"><div class="t" style="left:5px;top:3px">5</div></div><div class="cbtn" style="left:136px;top:124px;width:17px;height:10px"><i style="border-width:0 3px 3px 3px;border-color:transparent transparent #000 transparent;margin:-2px 0 0 -3px"></i></div><div class="cbtn" style="left:136px;top:135px;width:17px;height:10px"><i style="border-width:3px 3px 0 3px;margin:-2px 0 0 -3px"></i></div><div class="btn def" style="left:312px;top:394px">OK</div><div class="btn" style="left:408px;top:394px">Помощь</div><div class="a" style="left:0;top:427px;width:604px;height:1px;background:#c5c2b2"></div><div class="a" style="left:0;top:428px;width:604px;height:1px;background:#fff"></div><div class="t r" style="right:12px;top:432px;letter-spacing:.18px">d.vect -i map=smoll_town_100@mine_project type=point icon=basic/x size=5 color=128:0:0 lcolor=64:0:0 lsize=14 font=tahoma yref=botton</div><svg class="a" style="left:590px;top:432px" width="13" height="13" viewBox="0 0 13 13"><path d="M12 1L1 12M12 5L5 12M12 9L9 12" stroke="#aca899" stroke-width="1.2"/><path d="M13 1L2 12M13 5L6 12M13 9L10 12" stroke="#fff" stroke-width="1" transform="translate(-.2,1)"/></svg></div></div>
<div class="clip" style="left:0;top:243px;width:972px;height:781px;background:#fff"><div class="a" style="left:0;top:-243px;width:972px;height:1024px">
<svg class="a" style="left:936px;top:243px" width="36" height="781" viewBox="936 243 36 781"><use href="#tile" x="692" y="243" width="500" height="333"/><use href="#tile" x="692" y="576" width="500" height="333"/><use href="#tile" x="692" y="909" width="500" height="333"/></svg>
<div class="a" style="left:700px;top:245px;width:270px;height:60px;background:#7a90d8;border-radius:7px 7px 0 0"><div class="tb ina" style="width:270px;height:29px"><div class="wb cl" style="left:243px;top:6px"><svg viewBox="0 0 19 19"><path d="M5 5l9 9M14 5l-9 9" stroke="#fff" stroke-width="2.1" fill="none"/></svg></div></div><div class="a beige" style="left:4px;top:29px;width:262px;height:31px;border-top:1px solid #fff"></div></div>
<div class="a" style="left:400px;top:243px;width:541px;height:800px;background:#7a90d8;border-radius:7px 7px 0 0"><div class="tb ina" style="width:541px;height:29px"><div class="wb" style="left:468px;top:6px"><svg viewBox="0 0 19 19"><rect x="4" y="11" width="7" height="3" fill="#fff"/></svg></div><div class="wb" style="left:491px;top:6px"><svg viewBox="0 0 19 19"><path d="M4.5 5.5h10v8h-10z M4.5 4.5h10" stroke="#fff" stroke-width="1.4" fill="none"/><rect x="4" y="4" width="11" height="3" fill="#fff"/></svg></div><div class="wb cl" style="left:514px;top:6px"><svg viewBox="0 0 19 19"><path d="M5 5l9 9M14 5l-9 9" stroke="#fff" stroke-width="2.1" fill="none"/></svg></div></div><div class="a beige" style="left:4px;top:29px;width:533px;height:23px;border-top:1px solid #fff;border-bottom:1px solid #fff"></div><div class="a" style="left:4px;top:52px;width:533px;height:760px;background:#fff"></div></div>
<div class="a" style="left:590px;top:868px;width:4px;height:160px;background:#6f7fd4"></div><div class="a" style="left:594px;top:881px;width:324px;height:1px;background:#aca899"></div><div class="a beige" style="left:594px;top:882px;width:324px;height:17px"></div><div class="a" style="left:594px;top:899px;width:324px;height:5px;background:#6f7fd4"></div><svg class="a" style="left:594px;top:904px" width="163" height="60" viewBox="594 904 163 60"><rect x="594" y="904" width="163" height="60" fill="#1b3419"/><g filter="url(#b3)"><ellipse cx="728" cy="940" rx="22" ry="26" fill="#5a6a5c"/><ellipse cx="745" cy="925" rx="14" ry="30" fill="#234a3c"/></g><g filter="url(#b2)"><path d="M590 908L640 911L655 918L675 930L700 940L708 970L590 970Z" fill="#3d7b56"/><path d="M640 911L655 918L652 970L634 970Z" fill="#5a9a7a" opacity=".55"/><path d="M590 904L638 904L641 911L615 909L590 907Z" fill="#b8406c"/></g><text x="680" y="951" font-family="Liberation Serif,serif" font-style="italic" font-size="37" fill="#e9ede6" letter-spacing="-.8" opacity=".93">Lola</text></svg><svg class="a" style="left:757px;top:904px" width="161" height="60" viewBox="757 904 161 60"><rect x="757" y="904" width="161" height="60" fill="#1c3517"/><g filter="url(#b2)"><path d="M755 968L759 945L800 917L858 914L880 905L920 902L920 968Z" fill="#3d7448"/><path d="M830 968L845 935L868 912L882 904L920 902L920 936L880 946L865 968Z" fill="#2a5c48"/><path d="M866 968L880 946L920 934L920 968Z" fill="#3f7a4c"/></g></svg><svg class="a" style="left:594px;top:964px" width="163" height="60" viewBox="594 964 163 60"><rect x="594" y="964" width="163" height="60" fill="#2a4318"/><g filter="url(#b6)"><ellipse cx="715" cy="966" rx="48" ry="13" fill="#7a1c38"/><ellipse cx="748" cy="985" rx="14" ry="20" fill="#4a1226"/><ellipse cx="705" cy="1008" rx="36" ry="24" fill="#3f7260"/><ellipse cx="683" cy="986" rx="16" ry="9" fill="#93978a"/><ellipse cx="622" cy="1000" rx="30" ry="25" fill="#2f4c18"/></g></svg><svg class="a" style="left:757px;top:964px" width="161" height="60" viewBox="757 964 161 60"><rect x="757" y="964" width="161" height="60" fill="#2c4617"/><g filter="url(#b6)"><ellipse cx="857" cy="992" rx="20" ry="14" fill="#5f8032"/><ellipse cx="800" cy="1010" rx="30" ry="18" fill="#3a5a1e"/><ellipse cx="900" cy="1012" rx="20" ry="16" fill="#40601f"/><ellipse cx="790" cy="975" rx="25" ry="10" fill="#263e14"/></g></svg><div class="a" style="left:918px;top:868px;width:19px;height:160px;background:#f5f4ef"></div><div class="a" style="left:919px;top:868px;width:15px;height:108px;background:#c4d3f7;border:1px solid #fff;border-radius:2px;box-shadow:0 1px 0 #98a8d8"></div>
<div class="a" style="left:-308px;top:243px;width:837px;height:900px;background:#7b8fd6"><div class="tb ina" style="width:837px;height:29px;border-radius:0"><svg class="a" style="left:1px;top:7px" width="16" height="17" viewBox="0 0 16 17"><path d="M2.500 9.500L8.500 16L14.500 8.500" fill="none" stroke="#1a2a5a" stroke-width="1.600" opacity=".75"/><path d="M7 .5L14.500 6.500L8.500 15.500L.8 8.500Z" fill="#f6f8f6" stroke="#dfe6ee" stroke-width=".5"/><path d="M5 6.500l1.500 2.500l-1 2M9 4l1.500 1M7.500 7.500l2 1.500M10.500 8l-1.500 3.500M6.500 11.500l2 1" stroke="#4a7a3a" stroke-width="1.100" fill="none"/><path d="M10.500 6l1 1M7.500 5l.8 1" stroke="#b8862a" stroke-width="1.100"/><path d="M8.500 9.500l1 1" stroke="#333" stroke-width="1.200"/></svg><div class="tt" style="left:20px;top:8px;letter-spacing:-.3px">GRASS GIS Map Display: 1 - Location: kuzbass</div><div class="wb" style="left:764px;top:5px"><svg viewBox="0 0 19 19"><rect x="4" y="11" width="7" height="3" fill="#fff"/></svg></div><div class="wb" style="left:787px;top:5px"><svg viewBox="0 0 19 19"><path d="M4.5 5.5h10v8h-10z M4.5 4.5h10" stroke="#fff" stroke-width="1.4" fill="none"/><rect x="4" y="4" width="11" height="3" fill="#fff"/></svg></div><div class="wb cl" style="left:810px;top:5px"><svg viewBox="0 0 19 19"><path d="M5 5l9 9M14 5l-9 9" stroke="#fff" stroke-width="2.1" fill="none"/></svg></div></div><div class="a beige" style="left:0;top:29px;width:833px;height:38px;border-top:1px solid #fff;border-bottom:2px solid #c9c6b6"></div><div class="a" style="left:663px;top:30px;width:1px;height:36px;background:#b5b2a2"></div><div class="a" style="left:664px;top:30px;width:1px;height:36px;background:#f6f5ee"></div><div class="a" style="left:0;top:30px;width:663px;height:1px;background:#d8d5c6"></div><div class="a" style="left:2px;top:36px;width:3px;height:26px;background:repeating-linear-gradient(#8a8878 0,#8a8878 1px,transparent 1px,transparent 3px)"></div><div class="a" style="left:9px;top:33px;width:30px;height:30px;border:1px solid;border-color:#fff #9e9b8b #9e9b8b #fff;"><svg class="a" style="left:-1px;top:-1px" width="30" height="30" viewBox="0 0 30 30"><path d="M6 17.500C10 11.500 20 11.500 25.500 17C20 23 10 23 6 17.500Z" fill="#f6f8fb" stroke="#9fb4c8" stroke-width="1.100"/><circle cx="15.500" cy="17" r="4.600" fill="#5a8fd0" stroke="#3a6aaa" stroke-width=".9"/><circle cx="15.500" cy="17" r="1.800" fill="#1f3560"/><circle cx="14" cy="15.500" r="1.100" fill="#e8f0fa"/><path d="M5.500 14.500C10 9.500 20 9 26 14" stroke="#9aa8b4" stroke-width=".9" fill="none"/><path d="M25 17l2.500 .8" stroke="#7a6a6a" stroke-width="1.200"/></svg></div><div class="a" style="left:40px;top:33px;width:30px;height:30px;border:1px solid;border-color:#fff #9e9b8b #9e9b8b #fff;"><svg class="a" style="left:-1px;top:-1px" width="30" height="30" viewBox="0 0 30 30"><rect x="3.5" y="9.5" width="15" height="15" fill="#ece9d8" stroke="#9a9a9a"/><rect x="6.5" y="6.5" width="15" height="15" fill="#e4e6ea" stroke="#8a8a90"/><rect x="16" y="16" width="11" height="10" rx="1.5" fill="#3a5a78" stroke="#22384e" stroke-width=".8"/><path d="M18.5 22a3 3 0 0 1 5-2.5l1-1v3.5h-3.5l1.2-1.2a1.6 1.6 0 0 0-2.5 1.2z" fill="#dfe8f2"/></svg></div><div class="a" style="left:71px;top:33px;width:30px;height:30px;border:1px solid;border-color:#fff #9e9b8b #9e9b8b #fff;"><svg class="a" style="left:-1px;top:-1px" width="30" height="30" viewBox="0 0 30 30"><path d="M9.500 16.500L20 10L25 12.500L14.500 19.500Z" fill="#f6b0b4" stroke="#e05864" stroke-width="1"/><path d="M9.500 16.500L14.500 19.500L14.500 22L9.500 19.500Z" fill="#f09098" stroke="#e05864" stroke-width=".9"/><path d="M14.500 19.500L25 12.500L25 15L14.500 22Z" fill="#f3a0a8" stroke="#e05864" stroke-width=".9"/><rect x="3.500" y="19" width="5.500" height="3.500" fill="#fff"/></svg></div><div class="a" style="left:110px;top:33px;width:30px;height:30px;border:1px solid;border-color:#fff #9e9b8b #9e9b8b #fff;background:#f5f4ec;border-color:#7f7d70 #fff #fff #7f7d70;"><svg class="a" style="left:-1px;top:-1px" width="30" height="30" viewBox="0 0 30 30"><path d="M7.500 6.500L19 10.500L15.500 12.500L23 20L20.500 22.500L13 15L11 18.500Z" fill="#fafafa" stroke="#6e6e6e" stroke-width="1.300" stroke-linejoin="round"/></svg></div><div class="a" style="left:141px;top:33px;width:30px;height:30px;border:1px solid;border-color:#fff #9e9b8b #9e9b8b #fff;"><svg class="a" style="left:-1px;top:-1px" width="30" height="30" viewBox="0 0 30 30"><path d="M3 4L11 6.500L8.500 8L12.500 12L11 13.500L7 9.500L5.500 12Z" fill="#fafafa" stroke="#6e6e6e" stroke-width="1.100" stroke-linejoin="round"/><rect x="14.500" y="12.500" width="11" height="14" fill="#fdfdfd" stroke="#44566a" stroke-width="1.300"/><path d="M16.500 16h7M16.500 18.500h7M16.500 21h7M16.500 23.500h7" stroke="#44566a" stroke-width="1.100"/></svg></div><div class="a" style="left:172px;top:33px;width:30px;height:30px;border:1px solid;border-color:#fff #9e9b8b #9e9b8b #fff;"><svg class="a" style="left:-1px;top:-1px" width="30" height="30" viewBox="0 0 30 30"><g fill="#6a8cba" stroke="#3a5478" stroke-width=".9" stroke-linejoin="round"><path d="M15 4L19.500 9h-2.500v3h-4v-3h-2.500Z"/><path d="M15 27L19.500 22h-2.500v-3h-4v3h-2.500Z"/><path d="M3.500 15.500L8.500 11v2.500h3v4h-3v2.500Z"/><path d="M26.500 15.500L21.500 11v2.500h-3v4h3v2.500Z"/></g></svg></div><div class="a" style="left:203px;top:33px;width:30px;height:30px;border:1px solid;border-color:#fff #9e9b8b #9e9b8b #fff;"><svg class="a" style="left:-1px;top:-1px" width="30" height="30" viewBox="0 0 30 30"><circle cx="17" cy="13.5" r="7.500" fill="#eef1f5" stroke="#74787e" stroke-width="1.300"/><path d="M11.5 19.5l-6.500 6.500" stroke="#5a4a20" stroke-width="4.200" stroke-linecap="butt"/><path d="M10.7 20.3l-5 5" stroke="#ead870" stroke-width="2.600" stroke-linecap="butt"/><circle cx="11.5" cy="19.5" r="1.600" fill="#222"/><path d="M17 9.500v8M13 13.500h8" stroke="#5580b0" stroke-width="2.600"/></svg></div><div class="a" style="left:234px;top:33px;width:30px;height:30px;border:1px solid;border-color:#fff #9e9b8b #9e9b8b #fff;"><svg class="a" style="left:-1px;top:-1px" width="30" height="30" viewBox="0 0 30 30"><circle cx="17" cy="13.5" r="7.500" fill="#eef1f5" stroke="#74787e" stroke-width="1.300"/><path d="M11.5 19.5l-6.500 6.500" stroke="#5a4a20" stroke-width="4.200" stroke-linecap="butt"/><path d="M10.7 20.3l-5 5" stroke="#ead870" stroke-width="2.600" stroke-linecap="butt"/><circle cx="11.5" cy="19.5" r="1.600" fill="#222"/><path d="M13 13.500h8" stroke="#5580b0" stroke-width="2.600"/></svg></div><div class="a" style="left:265px;top:33px;width:30px;height:30px;border:1px solid;border-color:#fff #9e9b8b #9e9b8b #fff;"><svg class="a" style="left:-1px;top:-1px" width="30" height="30" viewBox="0 0 30 30"><circle cx="16" cy="12.5" r="7.500" fill="#eef1f5" stroke="#74787e" stroke-width="1.300"/><path d="M10.5 18.5l-6.500 6.500" stroke="#5a4a20" stroke-width="4.200" stroke-linecap="butt"/><path d="M9.7 19.3l-5 5" stroke="#ead870" stroke-width="2.600" stroke-linecap="butt"/><circle cx="10.5" cy="18.5" r="1.600" fill="#222"/><rect x="16" y="16" width="11" height="10" rx="1.5" fill="#3a5a78" stroke="#22384e" stroke-width=".8"/><path d="M23 18l-3.500 3l3.500 3" stroke="#fff" stroke-width="1.8" fill="none"/></svg></div><div class="a" style="left:296px;top:33px;width:30px;height:30px;border:1px solid;border-color:#fff #9e9b8b #9e9b8b #fff;"><svg class="a" style="left:-1px;top:-1px" width="30" height="30" viewBox="0 0 30 30"><circle cx="16" cy="12.5" r="7.500" fill="#eef1f5" stroke="#74787e" stroke-width="1.300"/><path d="M10.5 18.5l-6.500 6.500" stroke="#5a4a20" stroke-width="4.200" stroke-linecap="butt"/><path d="M9.7 19.3l-5 5" stroke="#ead870" stroke-width="2.600" stroke-linecap="butt"/><circle cx="10.5" cy="18.5" r="1.600" fill="#222"/><rect x="16" y="16" width="11" height="10" rx="1.5" fill="#3a5a78" stroke="#22384e" stroke-width=".8"/><path d="M18.500 19.500h6v4h-6z" fill="#a8b8c8"/></svg></div><div class="a" style="left:335px;top:33px;width:30px;height:30px;border:1px solid;border-color:#fff #9e9b8b #9e9b8b #fff;"><svg class="a" style="left:-1px;top:-1px" width="30" height="30" viewBox="0 0 30 30"><path d="M5.500 10v16.500h19" stroke="#4a4a4a" stroke-width="1.300" fill="none"/><path d="M5.500 9.500l-1.500 2.500h3z" fill="#4a4a4a"/><g fill="#2f5070"><rect x="12" y="5" width="4" height="4"/><rect x="20" y="5" width="4" height="4"/><rect x="16" y="9" width="4" height="4"/><rect x="12" y="13" width="4" height="4"/><rect x="20" y="13" width="4" height="4"/></g><g fill="#8fa8c0"><rect x="16" y="5" width="4" height="4"/><rect x="12" y="9" width="4" height="4"/><rect x="20" y="9" width="4" height="4"/><rect x="16" y="13" width="4" height="4"/></g><path d="M7 25L10 20L14 23L19 18L24 23L24 25Z" fill="#8f9fb0"/><path d="M7 23C9 17 12 24 15 21S20 15 24 21" stroke="#c02a3a" stroke-width="1.300" fill="none"/><path d="M7 25h17" stroke="#2a7a8a" stroke-width="1"/></svg></div><div class="a" style="left:374px;top:33px;width:30px;height:30px;border:1px solid;border-color:#fff #9e9b8b #9e9b8b #fff;"><svg class="a" style="left:-1px;top:-1px" width="30" height="30" viewBox="0 0 30 30"><rect x="4.500" y="5.500" width="3.500" height="3.500" fill="#e8e0a0" stroke="#5a5a3a" stroke-width="1.200"/><rect x="4.500" y="11.500" width="3.500" height="3.500" fill="#e8e0a0" stroke="#5a5a3a" stroke-width="1.200"/><path d="M10 8h3.500M10 14h3.500" stroke="#5a5a3a" stroke-width="1.400"/><rect x="4" y="20.500" width="11" height="2.500" fill="#c8c8b8" stroke="#5a5a4a" stroke-width=".9"/><path d="M20 13L23.300 5L26.600 13M21.300 10.300h4" stroke="#5a5a44" stroke-width="2" fill="none"/><rect x="17.500" y="18.500" width="9.500" height="9.500" rx="2" fill="#6fa46f" stroke="#3f7a48"/><path d="M22.250 20.500v5.500M19.500 23.250h5.500" stroke="#f4fff4" stroke-width="2.200"/></svg></div><div class="a" style="left:413px;top:33px;width:30px;height:30px;border:1px solid;border-color:#fff #9e9b8b #9e9b8b #fff;"><svg class="a" style="left:-1px;top:-1px" width="30" height="30" viewBox="0 0 30 30"><path d="M5 7C5 4 8 4 8 7V24C8 27 5 27 5 24Z" fill="#d4d8dc" stroke="#9aa0a6"/><path d="M7 5h15v17H8z" fill="#e6e8ea" stroke="#a8aeb4"/><rect x="16" y="16" width="11" height="10" rx="1.500" fill="#3a5a78" stroke="#22384e" stroke-width=".8"/><path d="M18 19v4M20 21h5M23 19l2 2l-2 2" stroke="#fff" stroke-width="1.300" fill="none"/></svg></div><div class="a" style="left:444px;top:33px;width:30px;height:30px;border:1px solid;border-color:#fff #9e9b8b #9e9b8b #fff;"><svg class="a" style="left:-1px;top:-1px" width="30" height="30" viewBox="0 0 30 30"><rect x="10.500" y="6.500" width="10" height="7" fill="#fff" stroke="#9aa0a8"/><rect x="5.500" y="12.500" width="20" height="9" rx="2.500" fill="#5f7f9f" stroke="#466078"/><rect x="6" y="13" width="19" height="3.500" rx="2" fill="#86a4c2"/><rect x="10.500" y="18.500" width="10" height="7" fill="#f6f6f6" stroke="#8a9098"/><path d="M12.500 21h6M12.500 23.500h6" stroke="#8a8a8a" stroke-width=".9"/></svg></div><div class="sunk" style="left:483px;top:40px;width:89px;height:19px"><div class="t" style="left:2px;top:3px">2D view</div><div class="cbtn" style="right:1px;top:1px;width:16px;height:15px"><i></i></div></div><div class="clip" style="left:0;top:67px;width:833px;height:833px;background:#fff"><div class="ml" style="left:-26px;top:-12px;letter-spacing:-1.2px">n1</div><div class="ml" style="left:7px;top:-12px">0.00</div><div class="ml" style="left:7px;top:-12px">1</div><div class="mx" style="left:-2px;top:11px"></div><div class="ml" style="left:405px;top:12px;letter-spacing:-1.2px">n2</div><div class="ml" style="left:438px;top:12px">0.00</div><div class="ml" style="left:438px;top:12px">2</div><div class="mx" style="left:429px;top:35px"></div><div class="ml" style="left:357px;top:142px;letter-spacing:-1.2px">n3</div><div class="ml" style="left:390px;top:142px">0.00</div><div class="ml" style="left:390px;top:142px">3</div><div class="mx" style="left:381px;top:165px"></div><div class="ml" style="left:523px;top:163px;letter-spacing:-1.2px">n4</div><div class="ml" style="left:556px;top:163px">0.00</div><div class="ml" style="left:556px;top:163px">4</div><div class="mx" style="left:547px;top:186px"></div><div class="ml" style="left:621px;top:334px;letter-spacing:-1.2px">n5</div><div class="ml" style="left:654px;top:334px">0.00</div><div class="ml" style="left:654px;top:334px">5</div><div class="mx" style="left:645px;top:357px"></div><div class="ml" style="left:695px;top:638px;letter-spacing:-1.2px">n7</div><div class="ml" style="left:728px;top:638px">0.00</div><div class="ml" style="left:728px;top:638px">7</div><div class="mx" style="left:719px;top:661px"></div></div></div>
<div class="a" style="left:359px;top:295px;width:614px;height:576px;border-radius:8px 8px 0 0;background:linear-gradient(90deg,#0019b4 0,#0019b4 1px,#1550e0 1px,#1a5ae8 3px,#1a4cc8 3px,#1a4cc8 4px,#d6e4fb 4px,#d6e4fb 5px,#ece9d8 5px,#ece9d8 609px,#d6e4fb 609px,#d6e4fb 610px,#1a4cc8 610px,#1a4cc8 611px,#1a5ae8 611px,#1550e0 613px,#0019b4 613px)"><div class="a" style="left:0;bottom:0;width:614px;height:5px;background:linear-gradient(#d6e4fb 0,#d6e4fb 1px,#1a4cc8 1px,#1a4cc8 2px,#1a5ae8 2px,#1550e0 4px,#0019b4 4px)"></div><div class="a" style="left:0;bottom:0;width:4px;height:5px;background:linear-gradient(90deg,#0019b4 0,#0019b4 1px,#1550e0 1px,#1a5ae8 3px,#1a4cc8 3px)"></div><div class="a" style="right:0;bottom:0;width:4px;height:5px;background:linear-gradient(270deg,#0019b4 0,#0019b4 1px,#1550e0 1px,#1a5ae8 3px,#1a4cc8 3px)"></div><div class="tb act" style="width:614px;top:0px;height:30px"><svg class="a" style="left:6px;top:8px" width="16" height="17" viewBox="0 0 16 17"><path d="M2.500 9.500L8.500 16L14.500 8.500" fill="none" stroke="#1a2a5a" stroke-width="1.600" opacity=".75"/><path d="M7 .5L14.500 6.500L8.500 15.500L.8 8.500Z" fill="#f6f8f6" stroke="#dfe6ee" stroke-width=".5"/><path d="M5 6.500l1.500 2.500l-1 2M9 4l1.500 1M7.500 7.500l2 1.500M10.500 8l-1.500 3.500M6.500 11.500l2 1" stroke="#4a7a3a" stroke-width="1.100" fill="none"/><path d="M10.500 6l1 1M7.500 5l.8 1" stroke="#b8862a" stroke-width="1.100"/><path d="M8.500 9.500l1 1" stroke="#333" stroke-width="1.200"/></svg><div class="tt" style="left:27px">d.vect [визуализация, вектор]</div><div class="wb" style="left:541px;top:6px"><svg viewBox="0 0 19 19"><rect x="4" y="11" width="7" height="3" fill="#fff"/></svg></div><div class="wb" style="left:564px;top:6px"><svg viewBox="0 0 19 19"><path d="M4.5 5.5h10v8h-10z M4.5 4.5h10" stroke="#fff" stroke-width="1.4" fill="none"/><rect x="4" y="4" width="11" height="3" fill="#fff"/></svg></div><div class="wb cl" style="left:587px;top:6px"><svg viewBox="0 0 19 19"><path d="M5 5l9 9M14 5l-9 9" stroke="#fff" stroke-width="2.1" fill="none"/></svg></div></div><div class="a beige" style="left:5px;top:29px;width:604px;height:542px;overflow:hidden"><div class="a" style="left:0;top:0;width:604px;height:1px;background:#0043bd"></div><div class="a" style="left:0;top:1px;width:604px;height:1px;background:#fbfaf6"></div><svg class="a" style="left:2px;top:6px" width="24" height="28" viewBox="0 0 24 28"><path d="M3 27h17" stroke="#8a7a70" stroke-width="1" opacity=".6"/><path d="M12 .7L23.300 12.500L12 26L.7 12.500Z" fill="#fafbf8" stroke="#b9bdb4" stroke-width=".9"/><path d="M4.500 17L12 25.500L19.500 16.500" fill="none" stroke="#111" stroke-width="1.700" stroke-linejoin="miter"/><path d="M12 24C10.500 18 8.500 14 6.500 11.500M12 24C12.500 18 14.500 13 16.500 10.500M12 24C11.800 19 11.500 15 10.500 12.500M12 24C13 20 13.500 17 14 15" stroke="#3f9a3a" stroke-width="1.700" fill="none" stroke-linecap="round"/><path d="M12 24C11 21 10 19 9 17.500M12 24C13 21 14 19.500 15 18" stroke="#1f6a1f" stroke-width="1.300" fill="none"/><path d="M11.500 4.500c.8 1 .8 2.500.3 3.500" stroke="#5a7a4a" stroke-width=".9" fill="none"/></svg><div class="t" style="left:33px;top:7px;letter-spacing:.05px">Показать векторные данные в активном фрейме монитора графики.</div><div class="a" style="left:0;top:36px;width:604px;height:27px"><svg class="a" style="left:0;top:0" width="604" height="27" viewBox="0 0 604 27"><defs><linearGradient id="tg" x1="0" y1="0" x2="0" y2="1"><stop offset="0" stop-color="#7cc5ad"/><stop offset=".25" stop-color="#8dcdb7"/><stop offset="1" stop-color="#d9ede5"/></linearGradient></defs><rect x="0" y="0" width="604" height="24" fill="url(#tg)"/><rect x="0" y="23" width="604" height="1" fill="#aca899"/><rect x="0" y="24" width="604" height="2" fill="#fff"/><path d="M391.5,23.5 L391.5,23.5 L407.5,7 Q409.0,5.5 412.0,5.5 L477,5.5 Q479.5,5.5 479.5,8.5 L479.5,23.5 Z" fill="#f1efe5"/><path d="M391.5,23.5 L391.5,23.5 L407.5,7 Q409.0,5.5 412.0,5.5 L477,5.5 Q479.5,5.5 479.5,8.5 L479.5,23.5" fill="none" stroke="#aca899" stroke-width="1"/><text x="444.25" y="18.5" text-anchor="middle" font-family="Liberation Sans,sans-serif" font-size="11" letter-spacing="0">Optional</text><path d="M246.5,23.5 L246.5,23.5 L262.5,7 Q264.0,5.5 267.0,5.5 L337,5.5 Q339.5,5.5 339.5,8.5 L339.5,23.5 Z" fill="#f1efe5"/><path d="M246.5,23.5 L246.5,23.5 L262.5,7 Q264.0,5.5 267.0,5.5 L337,5.5 Q339.5,5.5 339.5,8.5 L339.5,23.5" fill="none" stroke="#aca899" stroke-width="1"/><text x="301.75" y="18.5" text-anchor="middle" font-family="Liberation Sans,sans-serif" font-size="11" letter-spacing="0">Символы</text><path d="M191.5,23.5 L191.5,23.5 L207.5,7 Q209.0,5.5 212.0,5.5 L262.5,5.5 Q265.0,5.5 265.0,8.5 L265.0,23.5 Z" fill="#f1efe5"/><path d="M191.5,23.5 L191.5,23.5 L207.5,7 Q209.0,5.5 212.0,5.5 L262.5,5.5 Q265.0,5.5 265.0,8.5 L265.0,23.5" fill="none" stroke="#aca899" stroke-width="1"/><text x="237.0" y="18.5" text-anchor="middle" font-family="Liberation Sans,sans-serif" font-size="11" letter-spacing="0">Линии</text><path d="M132,23.5 L132,23.5 L148,7 Q149.5,5.5 152.5,5.5 L207.5,5.5 Q210.0,5.5 210.0,8.5 L210.0,23.5 Z" fill="#f1efe5"/><path d="M132,23.5 L132,23.5 L148,7 Q149.5,5.5 152.5,5.5 L207.5,5.5 Q210.0,5.5 210.0,8.5 L210.0,23.5" fill="none" stroke="#aca899" stroke-width="1"/><text x="179.75" y="18.5" text-anchor="middle" font-family="Liberation Sans,sans-serif" font-size="11" letter-spacing="0">Цвета</text><path d="M73,23.5 L73,23.5 L89,7 Q90.5,5.5 93.5,5.5 L148,5.5 Q150.5,5.5 150.5,8.5 L150.5,23.5 Z" fill="#f1efe5"/><path d="M73,23.5 L73,23.5 L89,7 Q90.5,5.5 93.5,5.5 L148,5.5 Q150.5,5.5 150.5,8.5 L150.5,23.5" fill="none" stroke="#aca899" stroke-width="1"/><text x="120.5" y="18.5" text-anchor="middle" font-family="Liberation Sans,sans-serif" font-size="11" letter-spacing="0">Выбор</text><path d="M7,23.5 L7,23.5 L23,7 Q24.5,5.5 27.5,5.5 L89,5.5 Q91.5,5.5 91.5,8.5 L91.5,23.5 Z" fill="#f1efe5"/><path d="M7,23.5 L7,23.5 L23,7 Q24.5,5.5 27.5,5.5 L89,5.5 Q91.5,5.5 91.5,8.5 L91.5,23.5" fill="none" stroke="#aca899" stroke-width="1"/><text x="52.5" y="18.5" text-anchor="middle" font-family="Liberation Sans,sans-serif" font-size="11" letter-spacing="0">Required</text><path d="M328,24.5 L328,23.5 L344,7 Q345.5,5.5 348.5,5.5 L407.5,5.5 Q410.0,5.5 410.0,8.5 L410.0,24.5 Z" fill="#fff"/><path d="M328,24.5 L328,23.5 L344,7 Q345.5,5.5 348.5,5.5 L407.5,5.5 Q410.0,5.5 410.0,8.5 L410.0,24.5" fill="none" stroke="#aca899" stroke-width="1"/><rect x="328" y="23" width="82.0" height="3" fill="#fff"/><text x="376" y="18.5" text-anchor="middle" font-family="Liberation Sans,sans-serif" font-size="11" font-weight="bold" letter-spacing="0">Подписи</text><path d="M559.5,11 l-4.5,4 l4.5,4 Z" fill="#ece9d8" stroke="#555" stroke-width=".9"/><path d="M573.5,10.5 l5,4.5 l-5,4.5 Z" fill="#333"/><path d="M587.5,11 l7,7 M594.5,11 l-7,7" stroke="#333" stroke-width="1.4"/></svg></div><div class="t" style="left:4px;top:68px;letter-spacing:-.1px">Номер слоя:</div><div class="t r" style="right:4px;top:68px">(llayer, integer)</div><div class="t" style="left:4px;top:112px;letter-spacing:-.1px">Имя показываемого поля:</div><div class="t r" style="right:4px;top:112px">(attrcol, string)</div><div class="t" style="left:4px;top:156px;letter-spacing:-.1px">Цвет подписи:</div><div class="t r" style="right:4px;top:156px">(lcolor, string)</div><div class="t" style="left:4px;top:206px;letter-spacing:-.1px">Цвет фона подписи:</div><div class="t r" style="right:4px;top:206px">(bgcolor, string)</div><div class="t" style="left:4px;top:256px;letter-spacing:-.1px">Цвет границы подписи:</div><div class="t r" style="right:4px;top:256px">(bcolor, string)</div><div class="t" style="left:4px;top:306px;letter-spacing:-.1px">Размер подписи (пиксели):</div><div class="t r" style="right:4px;top:306px">(lsize, integer)</div><div class="t" style="left:4px;top:350px;letter-spacing:-.1px">Имя шрифта:</div><div class="t r" style="right:4px;top:350px">(font, string)</div><div class="t" style="left:4px;top:394px;letter-spacing:-.1px">Выравнивание подписи по горизонтали:</div><div class="t r" style="right:4px;top:394px">(xref, string)</div><div class="t" style="left:4px;top:438px;letter-spacing:-.1px">Выравнивание подписи по вертикали:</div><div class="t r" style="right:4px;top:438px">(yref, string)</div><div class="sunk" style="left:4px;top:80px;width:99px;height:21px"><div class="t" style="left:4px;top:3px">1</div><div class="cbtn" style="right:1px;top:1px;width:17px;height:17px"><i></i></div></div><div class="sunk" style="left:4px;top:124px;width:299px;height:21px"><div class="t" style="left:4px;top:3px">NAME</div><div class="cbtn" style="right:1px;top:1px;width:17px;height:17px"><i></i></div></div><div class="cbtn" style="left:4px;top:168px;width:150px;height:27px"><div class="a" style="left:3px;top:3px;width:142px;height:19px;background:#400000;color:#e8e8e8;text-align:center;line-height:20px;font-size:11px;letter-spacing:.1px">64:0:0</div></div><div class="cbtn" style="left:4px;top:218px;width:150px;height:27px"><div class="a" style="left:3px;top:3px;width:142px;height:19px;background:#c8c8c8;color:#000;text-align:center;line-height:20px;font-size:11px;letter-spacing:.1px">Select Color</div></div><div class="sunk" style="left:159px;top:223px;width:13px;height:13px"></div><div class="t" style="left:177px;top:224px">Transparent</div><div class="cbtn" style="left:4px;top:268px;width:150px;height:27px"><div class="a" style="left:3px;top:3px;width:142px;height:19px;background:#c8c8c8;color:#000;text-align:center;line-height:20px;font-size:11px;letter-spacing:.1px">Select Color</div></div><div class="sunk" style="left:159px;top:273px;width:13px;height:13px"></div><div class="t" style="left:177px;top:274px">Transparent</div><div class="sunk" style="left:4px;top:318px;width:132px;height:21px"><div class="t" style="left:5px;top:3px">14</div></div><div class="cbtn" style="left:136px;top:318px;width:17px;height:10px"><i style="border-width:0 3px 3px 3px;border-color:transparent transparent #000 transparent;margin:-2px 0 0 -3px"></i></div><div class="cbtn" style="left:136px;top:329px;width:17px;height:10px"><i style="border-width:3px 3px 0 3px;margin:-2px 0 0 -3px"></i></div><div class="sunk" style="left:4px;top:362px;width:596px;height:21px"><div class="t" style="left:2px;top:3px">cyrilc</div></div><div class="sunk" style="left:4px;top:406px;width:299px;height:21px"><div class="t" style="left:4px;top:3px">left</div><div class="cbtn" style="right:1px;top:1px;width:17px;height:17px"><i></i></div></div><div class="sunk" style="left:4px;top:450px;width:299px;height:21px"><div class="t" style="left:4px;top:3px">bottom</div><div class="cbtn" style="right:1px;top:1px;width:17px;height:17px"><i></i></div></div><div class="btn" style="left:122px;top:490px"><span style="letter-spacing:.45px">Закрыть</span></div><div class="btn" style="left:217px;top:490px"><u>П</u>рименить</div><div class="btn def" style="left:312px;top:490px">OK</div><div class="btn" style="left:408px;top:490px"><u>П</u>омощь</div><div class="a" style="left:0;top:523px;width:604px;height:1px;background:#c5c2b2"></div><div class="a" style="left:0;top:524px;width:604px;height:1px;background:#fff"></div><div class="t" style="left:1px;top:528px;letter-spacing:.03px">d.vect -i map=smoll_town_100@mine_project type=point color=128:0:0 attrcol=NAME lcolor=64:0:0 lsize=14 font=cyrilc</div><svg class="a" style="left:590px;top:528px" width="13" height="13" viewBox="0 0 13 13"><path d="M12 1L1 12M12 5L5 12M12 9L9 12" stroke="#aca899" stroke-width="1.2"/><path d="M13 1L2 12M13 5L6 12M13 9L10 12" stroke="#fff" stroke-width="1" transform="translate(-.2,1)"/></svg></div></div>
</div></div>
</body></html>
